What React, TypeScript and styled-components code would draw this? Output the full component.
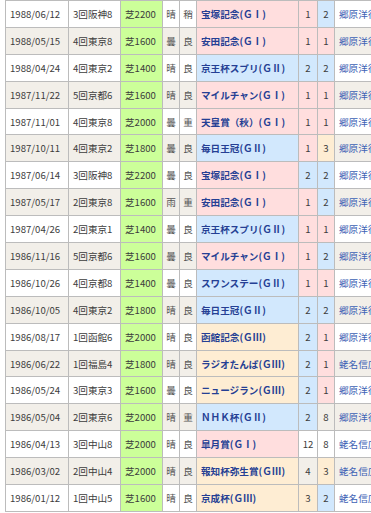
import React from 'react';
import styled, { createGlobalStyle } from 'styled-components';

const Colors = {
  border: '#bcbcbc',
  zebra: '#f2efe9',
  turf: '#ccff99',
  g1: '#ffdede',
  g2: '#d2e8fd',
  g3: '#feedd3',
  text: '#3c3c3c',
  race: '#253f94',
  jockey: '#3d62b5',
};

const GlobalStyle = createGlobalStyle`
  html, body {
    margin: 0;
    padding: 0;
    background: #fff;
    overflow: hidden;
  }
`;

const Page = styled.div`
  padding-left: 5px;
  width: 420px;
`;

const Table = styled.table`
  border-collapse: collapse;
  table-layout: fixed;
  width: 394px;
  font-family: 'Noto Sans CJK JP', 'Noto Sans', sans-serif;
  font-size: 9.6px;
  color: ${Colors.text};
`;

const Col = styled.col<{ $w: number }>`
  width: ${(p) => p.$w}px;
`;

const Row = styled.tr<{ $even: boolean }>`
  background-color: ${(p) => (p.$even ? Colors.zebra : '#fff')};
`;

const Cell = styled.td`
  border: 1px solid ${Colors.border};
  height: 25.9px;
  padding: 0 4px;
  white-space: nowrap;
  overflow: hidden;
  text-align: left;
`;

const TurfCell = styled(Cell)`
  background-color: ${Colors.turf};
`;

const SmallCell = styled(Cell)`
  padding: 0;
  text-align: center;
  color: #555;
`;

const gradeColor = { 1: Colors.g1, 2: Colors.g2, 3: Colors.g3 } as const;

const RaceCell = styled(Cell)<{ $grade: 1 | 2 | 3 }>`
  background-color: ${(p) => gradeColor[p.$grade]};
  color: ${Colors.race};
  font-weight: bold;
`;

const PlaceCell = styled(Cell)<{ $place: number }>`
  padding: 0;
  text-align: center;
  background-color: ${(p) =>
    p.$place >= 1 && p.$place <= 3 ? gradeColor[p.$place as 1 | 2 | 3] : 'transparent'};
`;

const JockeyCell = styled(Cell)`
  color: ${Colors.jockey};
`;

type Race = [string, string, string, string, string, string, 1 | 2 | 3, number, number, string];

const G = ['', '(ＧⅠ)', '(ＧⅡ)', '(ＧⅢ)'];
const widths = [63, 52, 42, 17, 17, 102, 19, 17, 65];

const races: Race[] = [
  ['1988/06/12', '3回阪神8', '芝2200', '晴', '稍', '宝塚記念', 1, 1, 2, '郷原洋行'],
  ['1988/05/15', '4回東京8', '芝1600', '曇', '良', '安田記念', 1, 1, 1, '郷原洋行'],
  ['1988/04/24', '4回東京2', '芝1400', '晴', '良', '京王杯スプリ', 2, 2, 2, '郷原洋行'],
  ['1987/11/22', '5回京都6', '芝1600', '晴', '良', 'マイルチャン', 1, 1, 1, '郷原洋行'],
  ['1987/11/01', '4回東京8', '芝2000', '曇', '重', '天皇賞（秋）', 1, 1, 1, '郷原洋行'],
  ['1987/10/11', '4回東京2', '芝1800', '曇', '良', '毎日王冠', 2, 1, 3, '郷原洋行'],
  ['1987/06/14', '3回阪神8', '芝2200', '曇', '良', '宝塚記念', 1, 2, 2, '郷原洋行'],
  ['1987/05/17', '2回東京8', '芝1600', '雨', '重', '安田記念', 1, 1, 2, '郷原洋行'],
  ['1987/04/26', '2回東京1', '芝1400', '曇', '良', '京王杯スプリ', 2, 1, 1, '郷原洋行'],
  ['1986/11/16', '5回京都6', '芝1600', '曇', '良', 'マイルチャン', 1, 1, 2, '郷原洋行'],
  ['1986/10/26', '4回京都8', '芝1400', '曇', '良', 'スワンステー', 2, 1, 1, '郷原洋行'],
  ['1986/10/05', '4回東京2', '芝1800', '晴', '良', '毎日王冠', 2, 2, 2, '郷原洋行'],
  ['1986/08/17', '1回函館6', '芝2000', '晴', '良', '函館記念', 3, 2, 1, '郷原洋行'],
  ['1986/06/22', '1回福島4', '芝1800', '晴', '良', 'ラジオたんぱ', 3, 2, 1, '蛯名信広'],
  ['1986/05/24', '3回東京3', '芝1600', '曇', '良', 'ニュージラン', 3, 2, 1, '郷原洋行'],
  ['1986/05/04', '2回東京6', '芝2000', '晴', '重', 'ＮＨＫ杯', 2, 2, 8, '郷原洋行'],
  ['1986/04/13', '3回中山8', '芝2000', '晴', '良', '皐月賞', 1, 12, 8, '蛯名信広'],
  ['1986/03/02', '2回中山4', '芝2000', '晴', '良', '報知杯弥生賞', 3, 4, 3, '蛯名信広'],
  ['1986/01/12', '1回中山5', '芝1600', '晴', '良', '京成杯', 3, 3, 2, '蛯名信広'],
];

export default function App() {
  return (
    <>
      <GlobalStyle />
      <Page>
        <Table>
          <colgroup>
            {widths.map((w, i) => (
              <Col key={i} $w={w} />
            ))}
          </colgroup>
          <tbody>
            {races.map((r, i) => (
              <Row key={r[0]} $even={i % 2 === 1}>
                <Cell>{r[0]}</Cell>
                <Cell>{r[1]}</Cell>
                <TurfCell>{r[2]}</TurfCell>
                <SmallCell>{r[3]}</SmallCell>
                <SmallCell>{r[4]}</SmallCell>
                <RaceCell $grade={r[6]}>
                  {r[5]}
                  {G[r[6]]}
                </RaceCell>
                <PlaceCell $place={r[7]}>{r[7]}</PlaceCell>
                <PlaceCell $place={r[8]}>{r[8]}</PlaceCell>
                <JockeyCell>{r[9]}</JockeyCell>
              </Row>
            ))}
          </tbody>
        </Table>
      </Page>
    </>
  );
}
